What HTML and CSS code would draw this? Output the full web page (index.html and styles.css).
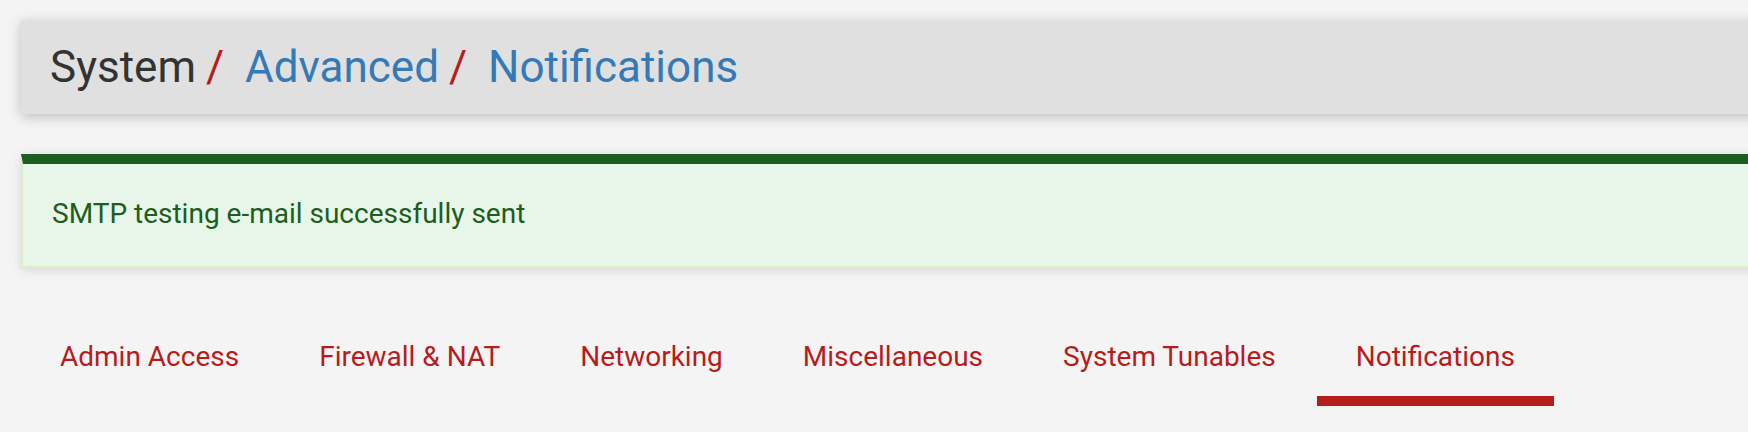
FILE: index.html
```html
<!DOCTYPE html>
<html lang="en">
<head>
<meta charset="utf-8">
<title>System / Advanced / Notifications</title>
<link rel="stylesheet" href="styles.css">
</head>
<body>
<div class="page">
  <div class="header-panel">
    <ol class="breadcrumb">
      <li class="crumb crumb-plain">System</li>
      <li class="crumb"><a href="#">Advanced</a></li>
      <li class="crumb"><a href="#">Notifications</a></li>
    </ol>
  </div>

  <div class="alert-success">SMTP testing e-mail successfully sent</div>

  <ul class="nav-tabs">
    <li class="tab"><a href="#">Admin Access</a></li>
    <li class="tab"><a href="#">Firewall &amp; NAT</a></li>
    <li class="tab"><a href="#">Networking</a></li>
    <li class="tab"><a href="#">Miscellaneous</a></li>
    <li class="tab"><a href="#">System Tunables</a></li>
    <li class="tab active"><a href="#">Notifications</a></li>
  </ul>
</div>
</body>
</html>
```
FILE: styles.css
```css
html, body {
  margin: 0;
  padding: 0;
}
body {
  background: #f4f4f4;
  font-family: Roboto, "Liberation Sans", sans-serif;
  overflow: hidden;
  width: 1748px;
  height: 432px;
}
.page {
  padding: 20px 0 0 21px;
  margin-right: -60px;
}
.header-panel {
  background: #e0e0e0;
  box-shadow: 0 3px 12px rgba(0, 0, 0, 0.22);
  padding: 21px 30px 21px 29px;
}
.breadcrumb {
  list-style: none;
  margin: 0;
  padding: 0;
  display: flex;
  font-size: 44px;
  line-height: 52px;
  color: #333333;
}
.crumb + .crumb::before {
  content: "/\00a0";
  color: #b71c1c;
  padding: 0 10px;
}
.crumb a {
  color: #337ab7;
  text-decoration: none;
}
.alert-success {
  margin-top: 40px;
  background: #e8f5e9;
  color: #1b5e20;
  border-top: 10px solid #1b5e20;
  border-left: 2px solid #dcedc8;
  border-bottom: 2px solid #dcedc8;
  box-shadow: 0 2px 10px rgba(0, 0, 0, 0.12);
  font-size: 28px;
  line-height: 40px;
  padding: 30px 30px 32px 29px;
}
.nav-tabs {
  list-style: none;
  margin: 49px 0 0 0;
  padding: 0;
  display: flex;
}
.tab {
  margin-right: 2px;
}
.tab a {
  display: block;
  padding: 20px 39px 19px 39px;
  font-size: 28px;
  line-height: 40px;
  color: #b71c1c;
  text-decoration: none;
  border-bottom: 10px solid transparent;
}
.tab.active a {
  border-bottom-color: #b71c1c;
}
```
